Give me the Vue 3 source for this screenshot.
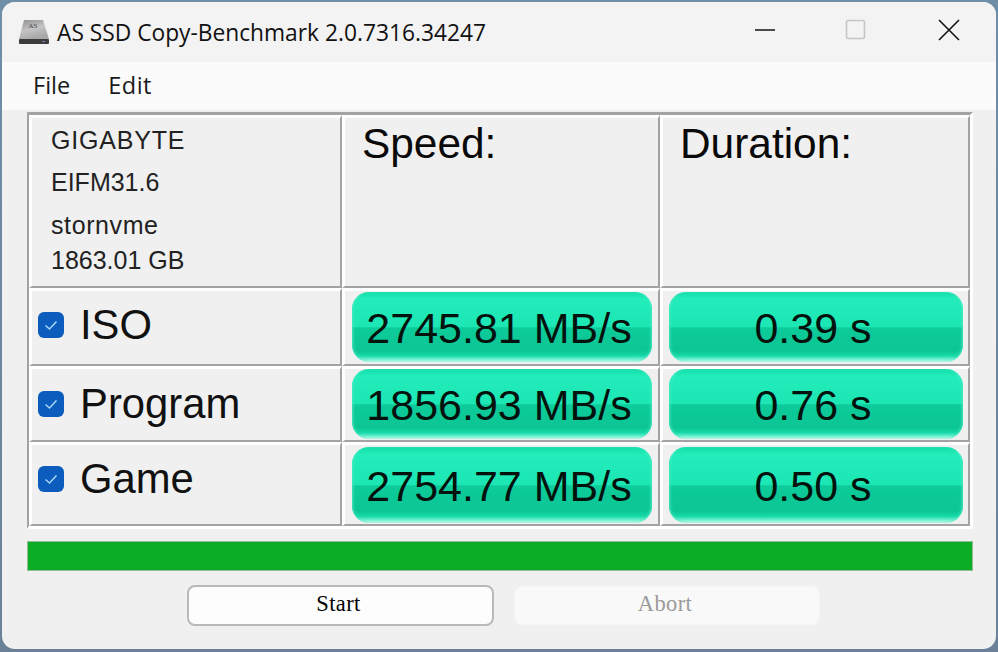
<script setup>
const info = [
  { text: 'GIGABYTE', cls: 'l1' },
  { text: 'EIFM31.6', cls: 'l2' },
  { text: 'stornvme', cls: 'l3' },
  { text: '1863.01 GB', cls: 'l4' }
]
const rows = [
  { name: 'ISO', speed: '2745.81 MB/s', time: '0.39 s', cls: 'r1' },
  { name: 'Program', speed: '1856.93 MB/s', time: '0.76 s', cls: 'r2' },
  { name: 'Game', speed: '2754.77 MB/s', time: '0.50 s', cls: 'r3' }
]
</script>

<template>
  <div class="desk">
    <div class="window">
      <header class="titlebar">
        <svg class="appicon" viewBox="0 0 32 26" width="32" height="26">
          <defs>
            <linearGradient id="hdd" x1="0" y1="0" x2="0.4" y2="1">
              <stop offset="0" stop-color="#8d8d8d" />
              <stop offset="0.55" stop-color="#c4c4c4" />
              <stop offset="1" stop-color="#a8a8a8" />
            </linearGradient>
          </defs>
          <path d="M6 1 H25 L31 20 H1 Z" fill="url(#hdd)" />
          <rect x="1" y="20" width="30" height="5" rx="1" fill="#3b3b3b" />
          <rect x="24" y="22" width="3" height="1" fill="#7d7dc8" />
          <text x="15" y="9" font-size="7" font-family="Liberation Serif, serif" text-anchor="middle" fill="#444">AS</text>
        </svg>
        <span class="title">AS SSD Copy-Benchmark 2.0.7316.34247</span>
        <div class="controls">
          <svg class="ctl" viewBox="0 0 22 22" width="22" height="22"><path d="M1 11 H21" stroke="#111" stroke-width="1.6" /></svg>
          <svg class="ctl" viewBox="0 0 22 22" width="22" height="22"><rect x="1.5" y="1.5" width="18" height="18" rx="2" fill="none" stroke="#c6c6c6" stroke-width="1.6" /></svg>
          <svg class="ctl close" viewBox="0 0 22 22" width="22" height="22"><path d="M1 1 L21 21 M21 1 L1 21" stroke="#111" stroke-width="1.6" /></svg>
        </div>
      </header>

      <nav class="menubar">
        <span class="menu file">File</span>
        <span class="menu edit">Edit</span>
      </nav>

      <main class="body">
        <section class="table">
          <div class="cell info">
            <span v-for="l in info" :key="l.text" :class="l.cls">{{ l.text }}</span>
          </div>
          <div class="cell head">Speed:</div>
          <div class="cell head">Duration:</div>

          <template v-for="r in rows" :key="r.name">
            <div class="cell label" :class="r.cls">
              <span class="check">
                <svg viewBox="0 0 26 26" width="26" height="26"><path d="M7.5 13.5 L11.5 17 L18.5 9.5" fill="none" stroke="#a5d2f7" stroke-width="1.6" /></svg>
              </span>
              <span class="name">{{ r.name }}</span>
            </div>
            <div class="cell slot speedslot"><div class="meter" :class="r.cls">{{ r.speed }}</div></div>
            <div class="cell slot timeslot"><div class="meter" :class="r.cls">{{ r.time }}</div></div>
          </template>
        </section>

        <div class="progress"></div>

        <div class="buttons">
          <button class="btn start">Start</button>
          <button class="btn abort" disabled>Abort</button>
        </div>
      </main>
    </div>
  </div>
</template>

<style scoped>
.desk {
  width: 998px;
  height: 652px;
  box-sizing: border-box;
  padding: 2px 2px 3px 2px;
  background: linear-gradient(180deg, #6f8ea8 0%, #6b8198 100%);
  font-family: "Liberation Sans", Arial, sans-serif;
  color: #0a0a0a;
  overflow: hidden;
}
.window {
  height: 100%;
  border-radius: 13px;
  overflow: hidden;
  background: #f0f0f0;
  display: flex;
  flex-direction: column;
}
.titlebar {
  height: 60px;
  flex: none;
  background: #f3f3f3;
  display: flex;
  align-items: center;
  padding-left: 16px;
}
.appicon {
  flex: none;
}
.title {
  margin-left: 7px;
  font-family: "Open Sans", "Noto Sans", sans-serif;
  font-size: 22.75px;
  white-space: nowrap;
  color: #111;
}
.controls {
  margin-left: auto;
  display: flex;
  align-items: center;
  padding: 0 36px 5px 0;
  gap: 69px;
}
.ctl {
  display: block;
}
.close {
  margin-left: 2px;
}
.menubar {
  height: 48px;
  flex: none;
  box-sizing: border-box;
  padding: 0 0 2px 31px;
  background: #fbfbfb;
  display: flex;
  align-items: center;
  font-family: "Open Sans", "Noto Sans", sans-serif;
  font-size: 23.5px;
  color: #1a1a1a;
}
.file {
  margin-right: 38px;
}
.edit {
  letter-spacing: 0.5px;
}
.body {
  flex: 1;
  padding: 2px 0 0 25px;
}
.table {
  width: 946px;
  box-sizing: border-box;
  border-top: 3px solid #a3a3a3;
  border-left: 2px solid #a3a3a3;
  border-right: 3px solid #ffffff;
  border-bottom: 3px solid #ffffff;
  display: grid;
  grid-template-columns: 313px 318px 310px;
  grid-template-rows: 173px 78px 76px 84px;
}
.cell {
  box-sizing: border-box;
  background: #f0f0f0;
  border-top: 3px solid #ffffff;
  border-left: 3px solid #ffffff;
  border-right: 2px solid #a3a3a3;
  border-bottom: 2px solid #a3a3a3;
}
.info {
  display: flex;
  flex-direction: column;
  padding-left: 19px;
  font-size: 25px;
  color: #222;
  line-height: 30px;
}
.l1 { margin-top: 7px; letter-spacing: 0.8px; }
.l2 { margin-top: 12px; }
.l3 { margin-top: 13px; letter-spacing: 0.6px; }
.l4 { margin-top: 5px; }
.head {
  font-size: 42.4px;
  line-height: 48px;
  padding: 2px 0 0 17px;
}
.label {
  display: flex;
  align-items: center;
  padding-left: 6px;
}
.label.r1 { padding-bottom: 5px; }
.label.r2 { padding-bottom: 2px; }
.label.r3 { padding-bottom: 11px; }
.check {
  width: 26px;
  height: 26px;
  flex: none;
  border-radius: 6px;
  background: #0b5cbd;
  margin-right: 16px;
}
.check svg {
  display: block;
}
.name {
  font-size: 41.8px;
  line-height: 48px;
  color: #111;
}
.slot {
  display: flex;
  align-items: center;
}
.speedslot {
  padding: 0 6px 1px 7px;
}
.timeslot {
  padding: 0 5px 1px 6px;
}
.meter {
  flex: 1;
  height: 70px;
  box-sizing: border-box;
  padding: 3px 6px 0 0;
  border-radius: 17px;
  display: flex;
  align-items: center;
  justify-content: center;
  font-size: 43px;
  color: #04120e;
  background: linear-gradient(180deg,
    #12dca8 0%, #22edbb 10%, #1ce6b3 50%,
    #0dcb9a 51%, #0cc594 84%, #16d9a8 91%, #6df0cf 96%, #d6faf0 100%);
  box-shadow: inset 2px 0 3px -1px #4aeac3, inset -2px 0 3px -1px #4aeac3;
}
.meter.r3 {
  height: 76px;
  margin-top: 2px;
}
.progress {
  width: 946px;
  height: 30px;
  box-sizing: border-box;
  margin-top: 12px;
  background: #0aad25;
  border: 1px solid #92bd98;
}
.buttons {
  margin-top: 14px;
  margin-left: 160px;
  display: flex;
  align-items: center;
  gap: 20px;
}
.btn {
  width: 307px;
  height: 41px;
  box-sizing: border-box;
  border-radius: 8px;
  font-family: "Liberation Serif", "DejaVu Serif", serif;
  font-size: 22.5px;
  letter-spacing: 0.4px;
  padding: 0 4px 3px 0;
}
.start {
  background: #fdfdfd;
  border: 2px solid #b9b9b9;
  color: #000;
}
.abort {
  width: 306px;
  height: 39px;
  background: #f9f9f9;
  border: 1px solid #f5f5f5;
  color: #9a9a9a;
}
</style>
